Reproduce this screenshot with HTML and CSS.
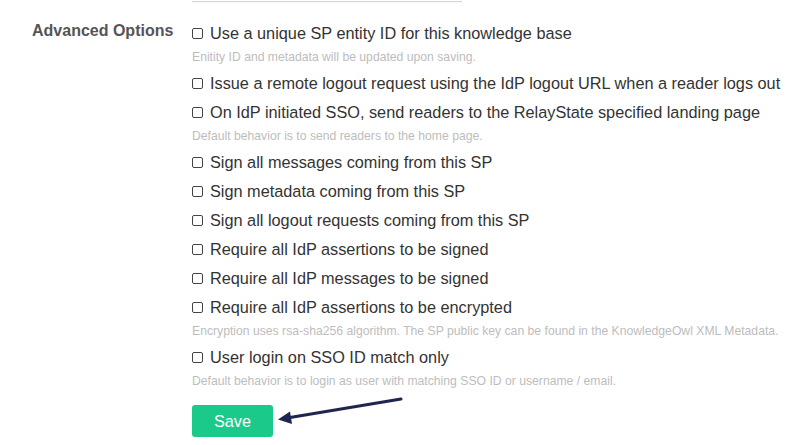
FILE: index.html
```html
<!DOCTYPE html>
<html>
<head>
<meta charset="utf-8">
<link rel="stylesheet" href="styles.css">
</head>
<body>
<div class="page">
  <div class="prev-input"></div>
  <div class="form-group">
    <div class="label">Advanced Options</div>
    <div class="options">
      <label class="opt"><input type="checkbox"><span>Use a unique SP entity ID for this knowledge base</span></label>
      <div class="help">Enitity ID and metadata will be updated upon saving.</div>
      <label class="opt"><input type="checkbox"><span>Issue a remote logout request using the IdP logout URL when a reader logs out</span></label>
      <label class="opt"><input type="checkbox"><span>On IdP initiated SSO, send readers to the RelayState specified landing page</span></label>
      <div class="help">Default behavior is to send readers to the home page.</div>
      <label class="opt"><input type="checkbox"><span>Sign all messages coming from this SP</span></label>
      <label class="opt"><input type="checkbox"><span>Sign metadata coming from this SP</span></label>
      <label class="opt"><input type="checkbox"><span>Sign all logout requests coming from this SP</span></label>
      <label class="opt"><input type="checkbox"><span>Require all IdP assertions to be signed</span></label>
      <label class="opt"><input type="checkbox"><span>Require all IdP messages to be signed</span></label>
      <label class="opt"><input type="checkbox"><span>Require all IdP assertions to be encrypted</span></label>
      <div class="help">Encryption uses rsa-sha256 algorithm. The SP public key can be found in the KnowledgeOwl XML Metadata.</div>
      <label class="opt"><input type="checkbox"><span>User login on SSO ID match only</span></label>
      <div class="help">Default behavior is to login as user with matching SSO ID or username / email.</div>
      <div class="actions">
        <button class="save">Save</button>
      </div>
    </div>
  </div>
  <svg class="arrow" width="140" height="40" viewBox="0 0 140 40">
    <line x1="124" y1="3" x2="10" y2="22" stroke="#1d2550" stroke-width="3" stroke-linecap="round"/>
    <polygon points="1,23.5 13,15.5 15,28" fill="#1d2550"/>
  </svg>
</div>
</body>
</html>
```
FILE: styles.css
```css
html, body {
  margin: 0;
  padding: 0;
  background: #fff;
}
body {
  font-family: "Liberation Sans", Arial, sans-serif;
  color: #333;
}
.page {
  position: relative;
  width: 800px;
  height: 445px;
  overflow: hidden;
}
.prev-input {
  margin-left: 192px;
  width: 270px;
  height: 1px;
  border-bottom: 1px solid #d6d6d6;
  box-shadow: 0 1px 1px rgba(0,0,0,0.04);
}
.form-group {
  display: flex;
  margin-top: 17px;
}
.label {
  width: 160px;
  padding-left: 32px;
  font-size: 16px;
  font-weight: bold;
  color: #555;
  line-height: 29px;
  margin-top: -3px;
}
.options {
  display: flex;
  flex-direction: column;
}
.opt {
  display: flex;
  align-items: center;
  height: 29px;
  font-size: 16.3px;
  line-height: 29px;
  color: #333;
  white-space: nowrap;
}
.opt input {
  appearance: none;
  -webkit-appearance: none;
  width: 11px;
  height: 11px;
  margin: 0 7px 0 0;
  border: 1px solid #444;
  border-radius: 2px;
  background: #fff;
  flex: none;
}
.help {
  font-size: 12.2px;
  line-height: 17px;
  color: #bdbdbd;
  padding: 1px 0 3px;
  white-space: nowrap;
}
.actions {
  margin-top: 12px;
}
.save {
  width: 81px;
  height: 32px;
  border: none;
  border-radius: 3px;
  background: #1bc98b;
  color: #fff;
  font-family: "Liberation Sans", Arial, sans-serif;
  font-size: 16.3px;
  padding: 0;
}
.arrow {
  position: absolute;
  left: 277px;
  top: 396px;
}
```
